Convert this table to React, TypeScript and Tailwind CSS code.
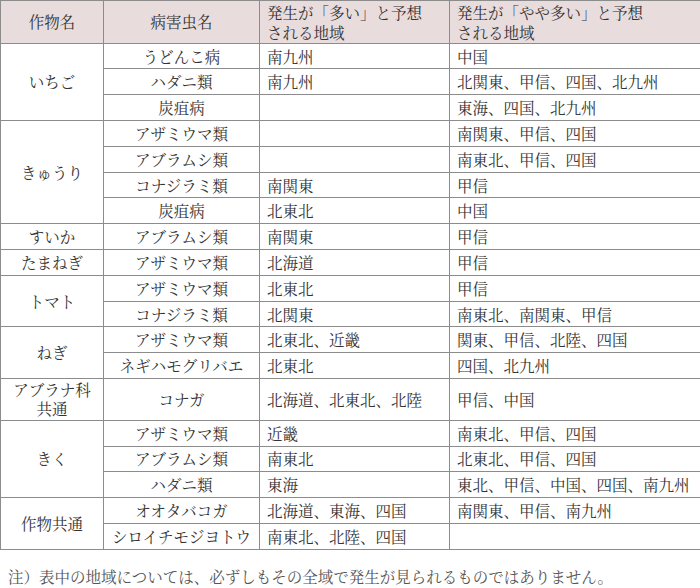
const rows: { crop?: string; span?: number; tall?: boolean; pest: string; many: string; some: string }[] = [
  { crop: "いちご", span: 3, pest: "うどんこ病", many: "南九州", some: "中国" },
  { pest: "ハダニ類", many: "南九州", some: "北関東、甲信、四国、北九州" },
  { pest: "炭疽病", many: "", some: "東海、四国、北九州" },
  { crop: "きゅうり", span: 4, pest: "アザミウマ類", many: "", some: "南関東、甲信、四国" },
  { pest: "アブラムシ類", many: "", some: "南東北、甲信、四国" },
  { pest: "コナジラミ類", many: "南関東", some: "甲信" },
  { pest: "炭疽病", many: "北東北", some: "中国" },
  { crop: "すいか", span: 1, pest: "アブラムシ類", many: "南関東", some: "甲信" },
  { crop: "たまねぎ", span: 1, pest: "アザミウマ類", many: "北海道", some: "甲信" },
  { crop: "トマト", span: 2, pest: "アザミウマ類", many: "北東北", some: "甲信" },
  { pest: "コナジラミ類", many: "北関東", some: "南東北、南関東、甲信" },
  { crop: "ねぎ", span: 2, pest: "アザミウマ類", many: "北東北、近畿", some: "関東、甲信、北陸、四国" },
  { pest: "ネギハモグリバエ", many: "北東北", some: "四国、北九州" },
  { crop: "アブラナ科\n共通", span: 1, tall: true, pest: "コナガ", many: "北海道、北東北、北陸", some: "甲信、中国" },
  { crop: "きく", span: 3, pest: "アザミウマ類", many: "近畿", some: "南東北、甲信、四国" },
  { pest: "アブラムシ類", many: "南東北", some: "北東北、甲信、四国" },
  { pest: "ハダニ類", many: "東海", some: "東北、甲信、中国、四国、南九州" },
  { crop: "作物共通", span: 2, pest: "オオタバコガ", many: "北海道、東海、四国", some: "南関東、甲信、南九州" },
  { pest: "シロイチモジヨトウ", many: "南東北、北陸、四国", some: "" },
];

const cell = "border border-[#8c8c8c] p-0 align-middle";

export default function App() {
  return (
    <div
      className="w-[700px] h-[588px] bg-white text-[#333] text-[15.5px] leading-[19px]"
      style={{ fontFamily: '"Noto Serif CJK JP", "Noto Sans CJK JP", serif' }}
    >
      <table className="w-[700px] table-fixed border-collapse border border-[#777]">
        <colgroup>
          <col className="w-[103px]" />
          <col className="w-[156px]" />
          <col className="w-[190px]" />
          <col className="w-[251px]" />
        </colgroup>
        <thead>
          <tr className="h-[42.7px] bg-[#e9dcdd]">
            <th className={`${cell} font-normal text-center`}>作物名</th>
            <th className={`${cell} font-normal text-center`}>病害虫名</th>
            <th className={`${cell} font-normal text-left pl-[7px] leading-[20px]`}>
              発生が「多い」と予想
              <br />
              される地域
            </th>
            <th className={`${cell} font-normal text-left pl-[7px] leading-[20px]`}>
              発生が「やや多い」と予想
              <br />
              される地域
            </th>
          </tr>
        </thead>
        <tbody>
          {rows.map((r, i) => (
            <tr key={i} className={r.tall ? "h-[41.7px]" : "h-[25.8px]"}>
              {r.crop && (
                <td rowSpan={r.span} className={`${cell} text-center whitespace-pre-line`}>
                  {r.crop}
                </td>
              )}
              <td className={`${cell} text-center`}>{r.pest}</td>
              <td className={`${cell} pl-[7px] whitespace-nowrap`}>{r.many}</td>
              <td className={`${cell} pl-[7px] whitespace-nowrap`}>{r.some}</td>
            </tr>
          ))}
        </tbody>
      </table>
      <p className="mt-[17px] pl-[8px] text-[#555]">
        注）表中の地域については、必ずしもその全域で発生が見られるものではありません。
      </p>
    </div>
  );
}
